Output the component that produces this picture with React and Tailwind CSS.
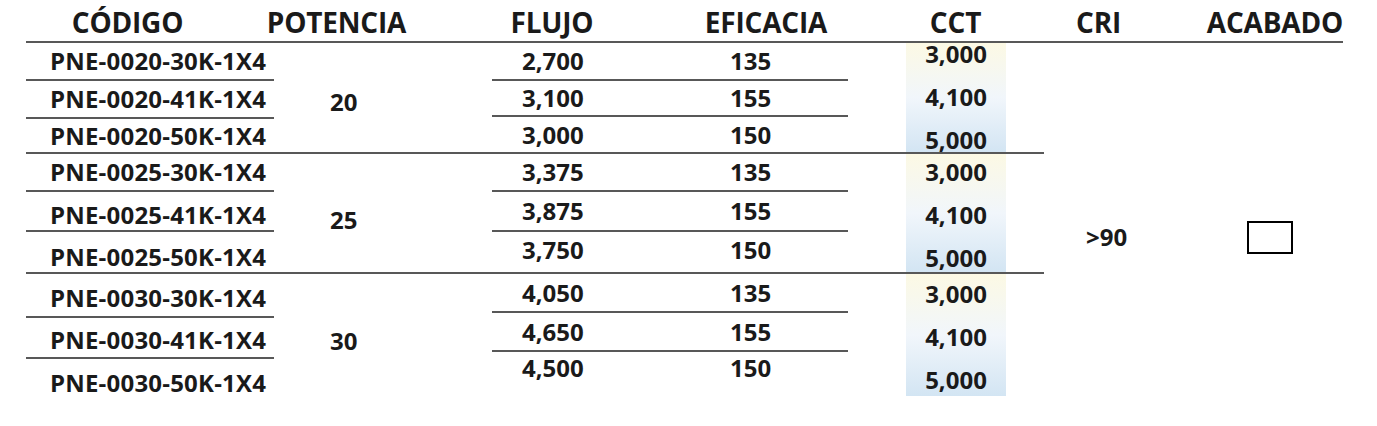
import React from "react";

const groups = [
  {
    power: "20",
    powerPad: "pt-[9px]",
    codes: [
      { code: "PNE-0020-30K-1X4", h: "h-[38px]", pad: "" },
      { code: "PNE-0020-41K-1X4", h: "h-[38px]", pad: "" },
      { code: "PNE-0020-50K-1X4", h: "h-[33px]", pad: "" },
    ],
    flows: [
      { flux: "2,700", eff: "135", h: "h-[38px]", pad: "" },
      { flux: "3,100", eff: "155", h: "h-[36px]", pad: "" },
      { flux: "3,000", eff: "150", h: "h-[35px]", pad: "" },
    ],
    band: "self-stretch pt-0",
    bandGap: "gap-[21px]",
  },
  {
    power: "25",
    powerPad: "pt-[14px]",
    codes: [
      { code: "PNE-0025-30K-1X4", h: "h-[38px]", pad: "" },
      { code: "PNE-0025-41K-1X4", h: "h-[40px]", pad: "pt-[8px]" },
      { code: "PNE-0025-50K-1X4", h: "h-[40px]", pad: "pt-[10px]" },
    ],
    flows: [
      { flux: "3,375", eff: "135", h: "h-[38px]", pad: "" },
      { flux: "3,875", eff: "155", h: "h-[40px]", pad: "" },
      { flux: "3,750", eff: "150", h: "h-[40px]", pad: "pb-[4px]" },
    ],
    band: "self-stretch pt-[7px]",
    bandGap: "gap-[21px]",
  },
  {
    power: "30",
    powerPad: "",
    codes: [
      { code: "PNE-0030-30K-1X4", h: "h-[44px]", pad: "pt-[6px]" },
      { code: "PNE-0030-41K-1X4", h: "h-[41px]", pad: "pt-[5px]" },
      { code: "PNE-0030-50K-1X4", h: "h-[48px]", pad: "" },
    ],
    flows: [
      { flux: "4,050", eff: "135", h: "h-[39px]", pad: "" },
      { flux: "4,650", eff: "155", h: "h-[39px]", pad: "" },
      { flux: "4,500", eff: "150", h: "h-[32px]", pad: "" },
    ],
    band: "self-start h-[122px] pt-[9px]",
    bandGap: "gap-[21px]",
  },
];

const cct = ["3,000", "4,100", "5,000"];

function Group({ g, last }) {
  return (
    <div className={`flex ${last ? "" : "border-b-2 border-[#585858]"}`}>
      <div className="flex w-[248px] flex-col">
        {g.codes.map((c, i) => (
          <div
            key={c.code}
            className={`flex items-center whitespace-nowrap pl-[24px] tracking-[0.2px] ${c.h} ${c.pad} ${
              i < 2 ? "border-b-2 border-[#585858]" : ""
            }`}
          >
            {c.code}
          </div>
        ))}
      </div>
      <div className={`flex w-[218px] items-center pl-[56px] ${g.powerPad}`}>{g.power}</div>
      <div className="flex w-[356px] flex-col self-start">
        {g.flows.map((f, i) => (
          <div
            key={f.flux}
            className={`flex items-center ${f.h} ${f.pad} ${i < 2 ? "border-b-2 border-[#585858]" : ""}`}
          >
            <span className="w-[238px] pl-[30px]">{f.flux}</span>
            <span>{f.eff}</span>
          </div>
        ))}
      </div>
      <div className="w-[58px]" />
      <div
        className={`flex w-[100px] flex-col items-center bg-linear-to-b from-[#fcf9e4] via-[#f1f6fb] to-[#d3e5f3] ${g.band} ${g.bandGap}`}
      >
        {cct.map((v) => (
          <span key={v} className="h-[22px] leading-[22px]">
            {v}
          </span>
        ))}
      </div>
      <div className="w-[38px]" />
    </div>
  );
}

export default function App() {
  return (
    <div className="h-[426px] w-[1377px] bg-white font-['Open_Sans',sans-serif] text-[#1a1a1a]">
      <div className="ml-[26px] w-[1317px]">
        <div className="flex h-[43px] border-b-2 border-[#585858] pt-[8px] text-[28px] font-bold leading-[28px] tracking-[-0.2px]">
          <span className="w-[203px] text-center">CÓDIGO</span>
          <span className="w-[215px] text-center">POTENCIA</span>
          <span className="w-[216px] text-center">FLUJO</span>
          <span className="w-[212px] text-center">EFICACIA</span>
          <span className="w-[167px] text-center">CCT</span>
          <span className="w-[119px] text-center">CRI</span>
          <span className="flex-1 text-right">ACABADO</span>
        </div>
        <div className="flex text-[24px] font-bold leading-[24px]">
          <div className="flex w-[1018px] flex-col">
            {groups.map((g, i) => (
              <Group key={g.power} g={g} last={i === groups.length - 1} />
            ))}
          </div>
          <div className="flex w-[299px] items-center pt-[24px]">
            <span className="w-[203px] pl-[42px]">&gt;90</span>
            <span className="h-[33px] w-[46px] border-2 border-black" />
          </div>
        </div>
      </div>
    </div>
  );
}
